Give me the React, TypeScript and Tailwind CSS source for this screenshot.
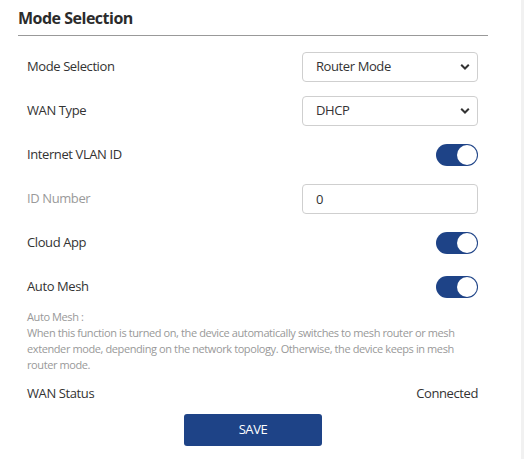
import React from 'react'

const BLUE = 'bg-[#1e4387]'

function Chevron() {
  return (
    <svg width="10" height="7" viewBox="0 0 10 7" className="pointer-events-none absolute right-[8px] top-1/2 -translate-y-1/2">
      <path d="M1.2 1.3 L5 5 L8.8 1.3" fill="none" stroke="#333" strokeWidth="2" />
    </svg>
  )
}

function Select({ value, options }: { value: string; options: string[] }) {
  return (
    <div className="relative w-[176px] h-[30px]">
      <select
        defaultValue={value}
        className="appearance-none w-full h-full rounded-[4px] border border-[#cfcfcf] bg-white pl-[13px] pr-6 text-[13px] tracking-[-0.4px] text-[#333] outline-none"
      >
        {options.map((o) => (
          <option key={o}>{o}</option>
        ))}
      </select>
      <Chevron />
    </div>
  )
}

function Toggle() {
  return (
    <div className={`w-[42px] h-[22px] rounded-full ${BLUE} p-[1px] flex justify-end`}>
      <div className="w-[20px] h-[20px] rounded-full bg-white" />
    </div>
  )
}

function Row({ label, muted, children }: { label: string; muted?: boolean; children: React.ReactNode }) {
  return (
    <div className="h-[44px] flex items-center justify-between">
      <span className={muted ? 'text-[#9a9a9a]' : 'text-[#333]'}>{label}</span>
      {children}
    </div>
  )
}

export default function App() {
  return (
    <div className="w-[524px] h-[459px] flex bg-white overflow-hidden" style={{ fontFamily: '"Open Sans", "Noto Sans", sans-serif' }}>
      <div className="flex-1 pl-[18px] pr-[33px]">
        <div className="pt-[6px] leading-[24px] text-[16px] font-bold tracking-[-0.5px] text-[#2b2b2b]">Mode Selection</div>
        <div className="mt-[5px] h-px bg-[#999]" />

        <div className="mt-[8px] pl-[9px] pr-[10px] text-[13px] tracking-[-0.4px]">
          <div className="pt-px">
            <Row label="Mode Selection">
              <Select value="Router Mode" options={['Router Mode', 'Access Point Mode']} />
            </Row>
            <Row label="WAN Type">
              <Select value="DHCP" options={['DHCP', 'Static IP', 'PPPoE']} />
            </Row>
            <Row label="Internet VLAN ID">
              <Toggle />
            </Row>
            <Row label="ID Number" muted>
              <input
                defaultValue="0"
                className="w-[176px] h-[30px] rounded-[4px] border border-[#cfcfcf] bg-white pl-[13px] text-[13px] text-[#333] outline-none"
              />
            </Row>
            <Row label="Cloud App">
              <Toggle />
            </Row>
            <Row label="Auto Mesh">
              <Toggle />
            </Row>
          </div>

          <div className="text-[11px] leading-[16px] tracking-[-0.4px] text-[#999] whitespace-nowrap">
            <div>Auto Mesh :</div>
            <div>
              When this function is turned on, the device automatically switches to mesh router or mesh
              <br />
              extender mode, depending on the network topology. Otherwise, the device keeps in mesh
              <br />
              router mode.
            </div>
          </div>

          <div className="h-[41px] flex items-center justify-between text-[#333]">
            <span>WAN Status</span>
            <span>Connected</span>
          </div>
        </div>

        <div className="flex justify-center">
          <button className={`w-[138px] h-[32px] rounded-[3px] ${BLUE} text-white text-[13px] tracking-[-0.4px]`}>SAVE</button>
        </div>
      </div>
      <div className="w-[3px] bg-[#f1f1f1]" />
    </div>
  )
}
